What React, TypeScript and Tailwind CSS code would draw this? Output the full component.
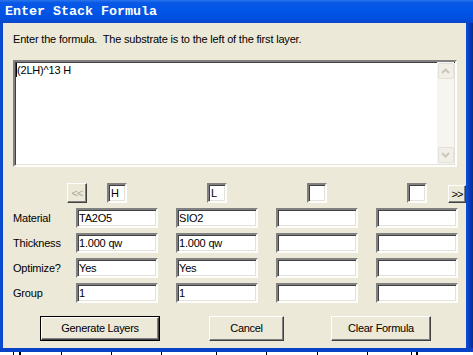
import React from "react";

const font = { fontFamily: '"Liberation Sans", Arial, sans-serif' };

function Field({ v, w = "w-[82px]" }: { v?: string; w?: string }) {
  return (
    <div
      className={`${w} h-[20px] bg-white border-2 border-t-[#808080] border-l-[#808080] border-b-[#fdfdfb] border-r-[#fdfdfb] shadow-[inset_1px_1px_0_#404040,inset_-1px_-1px_0_#e4e2d8] pl-[1px] text-[11px] leading-[16px] tracking-[-0.2px] text-black whitespace-nowrap overflow-hidden`}
    >
      {v}
    </div>
  );
}

function Box({ v }: { v?: string }) {
  return (
    <div className="w-[20px] h-[20px] bg-white border-2 border-t-[#808080] border-l-[#808080] border-b-[#fdfdfb] border-r-[#fdfdfb] shadow-[inset_1px_1px_0_#404040,inset_-1px_-1px_0_#e4e2d8] pl-[2px] text-[11px] leading-[16px] text-black">
      {v}
    </div>
  );
}

function Btn({
  children,
  w,
  def,
  disabled,
  h = "h-[25px]",
}: {
  children: React.ReactNode;
  w: string;
  def?: boolean;
  disabled?: boolean;
  h?: string;
}) {
  const inner = (
    <div
      className={`flex items-center justify-center w-full h-full bg-[#ECE9D8] border-t border-l border-t-white border-l-white border-b border-r border-b-[#404040] border-r-[#404040] shadow-[inset_-1px_-1px_0_#808080] text-[11px] tracking-[-0.3px] ${
        disabled ? "text-[#ACA899]" : "text-black"
      }`}
    >
      {children}
    </div>
  );
  return def ? (
    <div className={`${w} ${h} border border-black`}>{inner}</div>
  ) : (
    <div className={`${w} ${h}`}>{inner}</div>
  );
}

function Chevron({ up }: { up?: boolean }) {
  return (
    <svg width="9" height="6" viewBox="0 0 9 6">
      <path
        d={up ? "M1 5 L4.5 1.5 L8 5" : "M1 1 L4.5 4.5 L8 1"}
        stroke="#C9C7BA"
        strokeWidth="2"
        fill="none"
      />
    </svg>
  );
}

function ScrollBtn({ up }: { up?: boolean }) {
  return (
    <div className="w-[16px] h-[16px] rounded-[2px] border border-[#E3E1D7] bg-[#F1EFE8] flex items-center justify-center">
      <Chevron up={up} />
    </div>
  );
}

export default function App() {
  const rows: [string, string, string][] = [
    ["Material", "TA2O5", "SIO2"],
    ["Thickness", "1.000 qw", "1.000 qw"],
    ["Optimize?", "Yes", "Yes"],
    ["Group", "1", "1"],
  ];
  return (
    <div className="w-[473px] h-[355px] flex flex-col overflow-hidden" style={font}>
      {/* title bar */}
      <div className="h-[23px] flex items-center pl-[5px] bg-[linear-gradient(to_bottom,#2a74ee_0%,#0858e6_12%,#0156e8_45%,#0150df_80%,#0a45c8_100%)]">
        <span
          className="text-white font-bold text-[13.33px] leading-[14px] pt-[1px]"
          style={{ fontFamily: '"Liberation Mono", "Courier New", monospace' }}
        >
          Enter Stack Formula
        </span>
      </div>
      <div className="flex h-[325px]">
        <div className="w-[3px] bg-[linear-gradient(to_right,#0a4fd6,#0843c7)]" />
        <div className="flex-1 bg-[#ECE9D8] flex flex-col pl-[10px] pt-[10px]">
          <div className="text-[11px] leading-[13px] tracking-[-0.18px] whitespace-pre text-black">
            {"Enter the formula.  The substrate is to the left of the first layer."}
          </div>
          {/* textarea */}
          <div className="mt-[14px] w-[444px] h-[107px] bg-white border-2 border-t-[#808080] border-l-[#808080] border-b-[#fdfdfb] border-r-[#fdfdfb] shadow-[inset_1px_1px_0_#404040,inset_-1px_-1px_0_#e4e2d8] flex">
            <div className="flex-1 pl-[1px] pt-[1px] text-[11px] leading-[14px] tracking-[-0.2px] text-black flex items-start">
              <span className="w-[1px] h-[14px] bg-black" />
              <span>(2LH)^13 H</span>
            </div>
            <div className="w-[17px] bg-[#F6F5F0] flex flex-col justify-between items-center py-[1px] mr-[1px] mb-[1px]">
              <ScrollBtn up />
              <ScrollBtn />
            </div>
          </div>
          {/* header row */}
          <div className="mt-[16px] h-[20px] flex items-center">
            <div className="ml-[54px]">
              <Btn w="w-[20px]" h="h-[20px]" disabled>
                <span className="text-[11px] leading-none tracking-[-1px]">&lt;&lt;</span>
              </Btn>
            </div>
            <div className="ml-[20px]">
              <Box v="H" />
            </div>
            <div className="ml-[80px]">
              <Box v="L" />
            </div>
            <div className="ml-[80px]">
              <Box />
            </div>
            <div className="ml-[80px]">
              <Box />
            </div>
            <div className="ml-[21px] mt-[2px]">
              <Btn w="w-[18px]" h="h-[18px]">
                <span className="text-[11px] leading-none tracking-[-1px]">&gt;&gt;</span>
              </Btn>
            </div>
          </div>
          {/* grid */}
          <div className="mt-[5px] grid grid-cols-[45px_82px_82px_82px_82px] gap-x-[18px] gap-y-[5px]">
            {rows.map(([label, a, b]) => (
              <React.Fragment key={label}>
                <div className="text-[11px] leading-[20px] tracking-[-0.2px] text-black whitespace-nowrap">{label}</div>
                <Field v={a} />
                <Field v={b} />
                <Field />
                <Field />
              </React.Fragment>
            ))}
          </div>
          {/* buttons */}
          <div className="mt-[13px] flex">
            <div className="ml-[27px]">
              <Btn w="w-[120px]" def>
                Generate Layers
              </Btn>
            </div>
            <div className="ml-[49px]">
              <Btn w="w-[75px]">Cancel</Btn>
            </div>
            <div className="ml-[47px]">
              <Btn w="w-[100px]">Clear Formula</Btn>
            </div>
          </div>
        </div>
        <div className="w-[7px] bg-[linear-gradient(to_right,#0b4fd8,#0838b5_60%,#062c96)]" />
      </div>
      <div className="h-[4px] bg-[#0843c7]" />
      <div className="h-[3px] bg-white flex">
        <div className="ml-[13px] w-[1px] h-full bg-black" />
        <div className="ml-[5px] w-[2px] h-full bg-black" />
        <div className="ml-[40px] w-[1px] h-full bg-black" />
        <div className="ml-[49px] w-[1px] h-full bg-black" />
        <div className="ml-[49px] w-[1px] h-full bg-black" />
        <div className="ml-[54px] w-[1px] h-full bg-black" />
        <div className="ml-[49px] w-[1px] h-full bg-black" />
        <div className="ml-[50px] w-[1px] h-full bg-black" />
        <div className="ml-[49px] w-[1px] h-full bg-black" />
        <div className="ml-[43px] w-[1px] h-full bg-black" />
        <div className="ml-[4px] w-[2px] h-full bg-black" />
      </div>
    </div>
  );
}
